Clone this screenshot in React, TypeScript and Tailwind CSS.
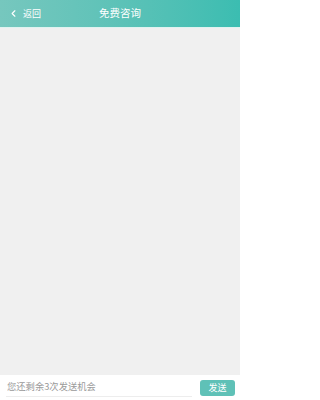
import { ChevronLeft } from "lucide-react";

const App = () => {
  return (
    <div className="flex h-[400px] w-[240px] flex-col bg-[#f0f0f0] font-['Noto_Sans_CJK_SC','Noto_Sans',sans-serif]">
      <header className="relative flex h-[27px] shrink-0 items-center bg-gradient-to-r from-[#76c7be] to-[#3bbdb1] text-white">
        <div className="flex items-center pl-[8px]">
          <ChevronLeft className="h-[11px] w-[11px]" strokeWidth={2.5} />
          <span className="ml-[4px] text-[9px] leading-none">返回</span>
        </div>
        <h1 className="absolute left-1/2 -translate-x-1/2 text-[10.5px] leading-none">免费咨询</h1>
      </header>
      <div className="h-px bg-[#dff3f0]" />

      <main className="flex-1" />

      <footer className="flex h-[25px] shrink-0 items-center gap-[8px] bg-white pl-[6px] pr-[5px]">
        <div className="flex h-[19px] flex-1 items-center border-b border-[#ededed] pl-px text-[9.3px] text-[#9a9a9a]">
          您还剩余3次发送机会
        </div>
        <button className="flex h-[16px] w-[35px] items-center justify-center rounded-[3px] bg-[#5fc1b7] text-[9px] text-white">
          发送
        </button>
      </footer>
    </div>
  );
};

export default App;
